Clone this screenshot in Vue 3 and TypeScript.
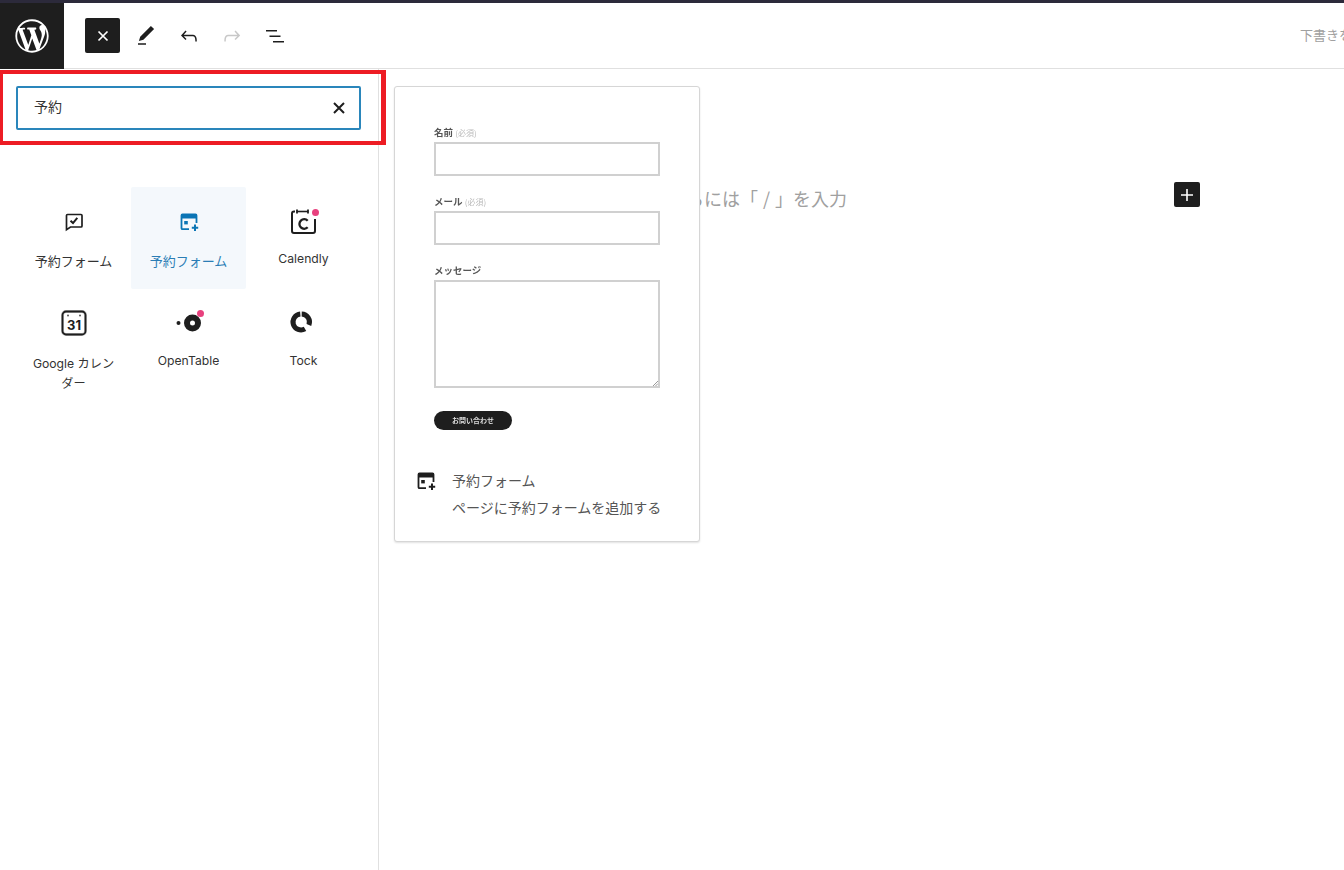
<script setup lang="ts">
interface Block { name: string; icon: string; active?: boolean; dot?: boolean; }
const blocks: Block[] = [
  { name: '予約フォーム', icon: 'chat' },
  { name: '予約フォーム', icon: 'form', active: true },
  { name: 'Calendly', icon: 'calendly', dot: true },
  { name: 'Google カレンダー', icon: 'gcal' },
  { name: 'OpenTable', icon: 'opentable', dot: true },
  { name: 'Tock', icon: 'tock' },
];
</script>

<template>
  <div class="page">
    <div class="strip"></div>
    <header class="header">
      <div class="logo">
        <svg width="40" height="40" viewBox="-2 -2 24 24" fill="#fff"><path d="M20 10c0-5.51-4.49-10-10-10C4.48 0 0 4.49 0 10c0 5.52 4.48 10 10 10 5.51 0 10-4.48 10-10zM7.78 15.37L4.37 6.22c.55-.02 1.17-.08 1.17-.08.5-.06.44-1.13-.06-1.11 0 0-1.45.11-2.37.11-.18 0-.37 0-.58-.01C4.12 2.69 6.87 1.11 10 1.11c2.33 0 4.45.87 6.05 2.34-.68-.11-1.65.39-1.65 1.58 0 .74.45 1.36.9 2.1.35.61.55 1.36.55 2.46 0 1.49-1.4 5-1.4 5l-3.03-8.37c.54-.02.82-.17.82-.17.5-.05.44-1.25-.06-1.22 0 0-1.44.12-2.38.12-.87 0-2.33-.12-2.33-.12-.5-.03-.56 1.2-.06 1.22l.92.08 1.26 3.41zM17.41 10c.24-.64.74-1.87.43-4.25.7 1.29 1.05 2.71 1.05 4.25 0 3.29-1.73 6.24-4.4 7.78.97-2.59 1.94-5.2 2.92-7.78zM6.1 18.09C3.12 16.65 1.11 13.53 1.11 10c0-1.3.23-2.48.72-3.59C3.25 10.3 4.67 14.2 6.1 18.09zm4.03-6.63l2.58 6.98c-.86.29-1.76.45-2.71.45-.79 0-1.57-.11-2.29-.33.81-2.38 1.62-4.74 2.42-7.1z"/></svg>
      </div>
      <div class="tools">
        <button class="tool tool-dark">
          <svg width="18" height="18" viewBox="0 0 18 18" fill="none" stroke="#fff" stroke-width="1.7"><path d="M4.500 4.500l9 9M13.500 4.500l-9 9"/></svg>
        </button>
        <button class="tool">
          <svg width="24" height="24" viewBox="0 0 24 24" fill="#1e1e1e"><path d="M20.100 5.100L16.900 2 6.200 12.700l-1.300 4.400 4.500-1.300L20.100 5.100zM4 20.800h8v-1.500H4v1.500z"/></svg>
        </button>
        <button class="tool">
          <svg width="24" height="24" viewBox="0 0 24 24" fill="#1e1e1e"><path d="M18.300 11.700c-.6-.6-1.400-.9-2.300-.9H6.700l2.900-3.300-1.100-1-4.500 5L8.500 16l1-1-2.700-2.700H16c.5 0 .9.2 1.300.5 1 1 1 3.400 1 4.500v.3h1.500v-.2c0-1.500 0-4.300-1.500-5.700z"/></svg>
        </button>
        <button class="tool">
          <svg width="24" height="24" viewBox="0 0 24 24" fill="#c8c8c8"><path d="M15.600 6.500l-1.100 1 2.900 3.300H8c-.9 0-1.700.3-2.300.9-1.400 1.500-1.400 4.200-1.400 5.600v.2h1.500v-.3c0-1.100 0-3.500 1-4.500.3-.3.7-.5 1.300-.5h9.200L14.500 15l1.100 1.100 4.600-4.600-4.600-5z"/></svg>
        </button>
        <button class="tool">
          <svg width="24" height="24" viewBox="0 0 24 24" fill="#1e1e1e"><path d="M3 6h11v1.500H3V6zm3.500 5.500h11V13h-11v-1.500zM21 17H10v1.500h11V17z"/></svg>
        </button>
      </div>
      <div class="draft">下書きを保存</div>
    </header>

    <div class="body">
      <aside class="sidebar">
        <div class="search">
          <span class="search-text">予約</span>
          <svg width="24" height="24" viewBox="0 0 24 24" fill="none" stroke="#1e1e1e" stroke-width="2"><path d="M7 7l10 10M17 7L7 17"/></svg>
        </div>
        <div class="grid">
          <div v-for="b in blocks" :key="b.icon" class="item" :class="{ active: b.active }">
            <span class="icon-wrap" :class="'at-' + b.icon">
              <svg v-if="b.icon === 'chat'" width="24" height="24" viewBox="0 0 24 24" fill="none" stroke="#1e1e1e" stroke-width="1.700"><path d="M5.500 4.500h13.500a1 1 0 0 1 1 1V16a1 1 0 0 1-1 1H8.500l-4 2.700V5.500a1 1 0 0 1 1-1z"/><path d="M8.500 10.800l2.500 2.300 4.300-5.200" stroke-width="2"/></svg>
              <svg v-else-if="b.icon === 'form'" width="24" height="24" viewBox="0 0 24 24" fill="none" stroke="currentColor"><path d="M12 19.200H5.500a1 1 0 0 1-1-1V5.500a1 1 0 0 1 1-1h13a1 1 0 0 1 1 1V13" stroke-width="1.800"/><path d="M4.500 5h15v3h-15z" fill="currentColor" stroke-width="1"/><path d="M7.200 11h3.600v3.400H7.200z" fill="currentColor" stroke="none"/><path d="M18 14.500v6.400M14.800 17.700h6.400" stroke-width="2"/></svg>
              <svg v-else-if="b.icon === 'calendly'" width="30" height="30" viewBox="0 0 30 30" fill="none" stroke="#1e1e1e" stroke-width="2"><path d="M6 4.500H5a2 2 0 0 0-2 2V24a2 2 0 0 0 2 2h19a2 2 0 0 0 2-2V12"/><path d="M8 4.500h11" stroke-width="1.600"/><path d="M8 2.500v4M19 2.500v4" stroke-width="1.800"/><path d="M18.700 13.700a4.800 4.800 0 1 0 0 6.600" stroke-width="2.300"/></svg>
              <svg v-else-if="b.icon === 'gcal'" width="28" height="28" viewBox="0 0 28 28" fill="none"><rect x="2.500" y="2.500" width="23" height="23" rx="3.500" stroke="#c4c4c4" stroke-width="3"/><rect x="2.500" y="2.500" width="23" height="23" rx="3.500" stroke="#1e1e1e" stroke-width="1.800"/><circle cx="8" cy="6.500" r="1" fill="#555"/><circle cx="20" cy="6.500" r="1" fill="#555"/><text x="14" y="20.500" text-anchor="middle" class="cal-num">31</text></svg>
              <svg v-else-if="b.icon === 'opentable'" width="28" height="24" viewBox="0 0 28 24" fill="#1e1e1e"><circle cx="3.500" cy="11" r="2"/><path fill-rule="evenodd" d="M17.500 2.500a8.500 8.500 0 1 1 0 17 8.500 8.500 0 0 1 0-17zm0 6a2.500 2.500 0 1 0 0 5 2.500 2.500 0 0 0 0-5z"/></svg>
              <svg v-else width="30" height="30" viewBox="0 0 30 30" fill="none" stroke="#1e1e1e" stroke-width="5"><path d="M11.800 4.030A8 8 0 1 0 16.500 18.930" transform="translate(-0.500 1)"/><path d="M13.200 4.030A8 8 0 0 1 20.400 15" transform="translate(-0.500 1)"/></svg>
              <span v-if="b.dot" class="dot"></span>
            </span>
            <span class="label" :class="{ cjk: b.icon === 'chat' || b.icon === 'form' }">{{ b.name }}</span>
          </div>
        </div>
      </aside>
      <main class="editor">
        <div class="placeholder">ブロックを選択するには「<span class="slash">/</span>」を入力</div>
        <button class="inserter">
          <svg width="24" height="24" viewBox="0 0 24 24" fill="#fff"><path d="M18 11.200h-5.200V6h-1.600v5.200H6v1.600h5.200V18h1.600v-5.200H18z"/></svg>
        </button>
      </main>
    </div>

    <div class="preview">
      <div class="form">
        <div class="f-label">名前 <small>(必須)</small></div>
        <div class="f-input"></div>
        <div class="f-label">メール <small>(必須)</small></div>
        <div class="f-input"></div>
        <div class="f-label">メッセージ</div>
        <div class="f-input f-area">
          <svg class="grip" width="5" height="5" viewBox="0 0 5 5" stroke="#999"><path d="M5 0L0 5M5 2.500L2.500 5"/></svg>
        </div>
        <div class="f-btn">お問い合わせ</div>
      </div>
      <div class="desc">
        <svg width="24" height="24" viewBox="0 0 24 24" fill="none" stroke="#1e1e1e"><path d="M12 19.200H5.500a1 1 0 0 1-1-1V5.500a1 1 0 0 1 1-1h13a1 1 0 0 1 1 1V13" stroke-width="1.800"/><path d="M4.500 5h15v3h-15z" fill="#1e1e1e" stroke-width="1"/><path d="M7.200 11h3.600v3.400H7.200z" fill="#1e1e1e" stroke="none"/><path d="M18 14.500v6.400M14.800 17.700h6.400" stroke-width="2"/></svg>
        <div class="desc-text">
          <div>予約フォーム</div>
          <div class="desc-sub">ページに予約フォームを追加する</div>
        </div>
      </div>
    </div>

    <div class="highlight"></div>
  </div>
</template>

<style>
html, body { margin: 0; background: #fff; overflow: hidden; }
</style>

<style scoped>
.page {
  position: relative;
  width: 1344px;
  height: 870px;
  overflow: hidden;
  display: flex;
  flex-direction: column;
  background: #fff;
  color: #1e1e1e;
  font-family: Inter, "Noto Sans CJK JP", sans-serif;
}
.strip { height: 3px; background: #2c2a3b; flex: none; }
.header {
  height: 66px;
  flex: none;
  display: flex;
  align-items: center;
  box-sizing: border-box;
  border-bottom: 1px solid #e0e0e0;
}
.logo {
  width: 64px;
  height: 66px;
  margin-bottom: -1px;
  background: #1e1e1e;
  display: flex;
  align-items: center;
  justify-content: center;
  flex: none;
}
.tools { display: flex; align-items: center; gap: 8px; margin-left: 21px; flex: 1; }
.tool {
  width: 35px;
  height: 35px;
  padding: 0;
  border: 0;
  background: none;
  border-radius: 2px;
  display: flex;
  align-items: center;
  justify-content: center;
}
.tool-dark { background: #1e1e1e; }
.draft {
  flex: none;
  width: 44px;
  overflow: hidden;
  white-space: nowrap;
  font-size: 13px;
  color: #a0a0a0;
  padding-bottom: 2px;
  font-family: "Noto Sans CJK JP", sans-serif;
}
.body { flex: 1; display: flex; min-height: 0; }
.sidebar {
  width: 379px;
  flex: none;
  box-sizing: border-box;
  border-right: 1px solid #e0e0e0;
  padding: 17px 17px 0 16px;
}
.search {
  height: 44px;
  box-sizing: border-box;
  border: 2px solid #2a86bb;
  border-radius: 2px;
  display: flex;
  align-items: center;
  justify-content: space-between;
  padding: 0 8px 0 16px;
  font-size: 14px;
  font-family: "Noto Sans CJK JP", sans-serif;
}
.search-text { position: relative; top: -2px; color: #333; }
.grid {
  display: grid;
  grid-template-columns: repeat(3, 115px);
  margin: 57px 0 0 0;
}
.item {
  height: 102px;
  display: flex;
  flex-direction: column;
  align-items: center;
  box-sizing: border-box;
  padding-top: 20px;
  border-radius: 2px;
  font-size: 12.200px;
  line-height: 20px;
  text-align: center;
  color: #333;
}
.item.active { background: #f4f8fc; color: #2a7db5; }
.icon-wrap {
  position: relative;
  height: 30px;
  display: flex;
  align-items: center;
  justify-content: center;
}
.at-form { color: #0a75b5; }
.label { margin-top: 12px; padding: 0 14px; }
.at-gcal + .label { margin-top: 17px; }
.label.cjk { font-size: 13px; margin-top: 14px; font-family: "Noto Sans CJK JP", sans-serif; }
.dot {
  position: absolute;
  top: 1px;
  right: -1px;
  width: 7px;
  height: 7px;
  border-radius: 50%;
  background: #e8417e;
}
.at-calendly .dot { top: 2px; right: 0; }
.cal-num { font: 700 13px Inter, sans-serif; fill: #1e1e1e; }
.editor { flex: 1; position: relative; }
.placeholder {
  position: absolute;
  right: 497px;
  top: 116px;
  font-size: 18px;
  color: #a0a0a0;
  font-family: "Noto Sans CJK JP", sans-serif;
  white-space: nowrap;
}
.slash { padding: 0 5px; }
.inserter {
  position: absolute;
  left: 795px;
  top: 113px;
  width: 26px;
  height: 25px;
  padding: 0;
  border: 0;
  border-radius: 2px;
  background: #1e1e1e;
  display: flex;
  align-items: center;
  justify-content: center;
}
.preview {
  position: absolute;
  left: 394px;
  top: 86px;
  width: 306px;
  height: 456px;
  box-sizing: border-box;
  background: #fff;
  border: 1px solid #d6d6d6;
  border-radius: 3px;
  box-shadow: 0 1px 2px rgba(0,0,0,.12);
  display: flex;
  flex-direction: column;
  font-family: "Noto Sans CJK JP", sans-serif;
}
.form { padding: 38px 38px 0 39px; filter: blur(0.35px); }
.f-label {
  font-size: 9.500px;
  font-weight: 700;
  height: 15px;
  line-height: 14px;
  color: #555;
  margin-bottom: 2px;
}
.f-label small { font-size: 8px; font-weight: 400; color: #bbb; }
.f-input {
  width: 226px;
  height: 34px;
  box-sizing: border-box;
  border: 2px solid #d0d0d0;
  margin-bottom: 18px;
  position: relative;
}
.f-area { height: 108px; margin-bottom: 23px; }
.grip { position: absolute; right: 0; bottom: 0; }
.f-btn {
  width: 78px;
  height: 19px;
  border-radius: 10px;
  background: #1e1e1e;
  color: #ddd;
  font-size: 7px;
  font-weight: 700;
  line-height: 19px;
  text-align: center;
}
.desc {
  margin-top: 40px;
  padding-left: 19px;
  display: flex;
  gap: 14px;
  font-size: 14px;
  line-height: 20px;
  color: #555;
}
.desc svg { flex: none; margin-top: -1px; }
.desc-sub { margin-top: 7px; white-space: nowrap; }
.highlight {
  position: absolute;
  left: 0;
  top: 70px;
  width: 386px;
  height: 75px;
  box-sizing: border-box;
  border: 4px solid #ed1c24;
  border-left-width: 3px;
  border-right-width: 5px;
  pointer-events: none;
}
</style>
